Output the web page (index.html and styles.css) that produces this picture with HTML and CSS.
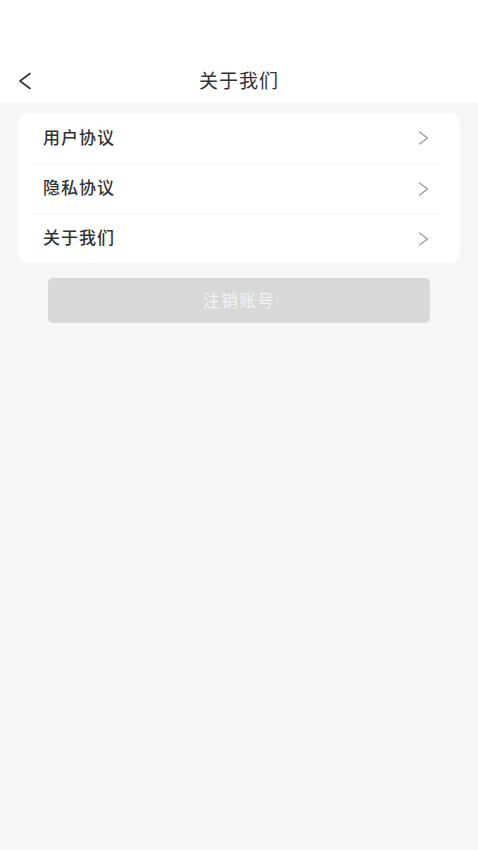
FILE: index.html
```html
<!DOCTYPE html>
<html lang="zh-CN">
<head>
<meta charset="utf-8">
<meta name="viewport" content="width=device-width, initial-scale=1">
<title>关于我们</title>
<link rel="stylesheet" href="styles.css">
</head>
<body>
<header class="header">
  <div class="navbar">
    <span class="back">
      <svg width="14" height="18" viewBox="0 0 14 18" fill="none" stroke="#333" stroke-width="1.6" stroke-linecap="round" stroke-linejoin="round"><path d="M12 1.5 L2 9 L12 16.5"/></svg>
    </span>
    <h1 class="title">关于我们</h1>
  </div>
</header>
<main class="main">
  <section class="card">
    <div class="row"><span class="label">用户协议</span><svg class="chev" width="11" height="14" viewBox="0 0 11 14" fill="none" stroke="#9a9a9a" stroke-width="1.3" stroke-linecap="round" stroke-linejoin="round"><path d="M1.5 1 L9.5 7 L1.5 13"/></svg></div>
    <div class="row"><span class="label">隐私协议</span><svg class="chev" width="11" height="14" viewBox="0 0 11 14" fill="none" stroke="#9a9a9a" stroke-width="1.3" stroke-linecap="round" stroke-linejoin="round"><path d="M1.5 1 L9.5 7 L1.5 13"/></svg></div>
    <div class="row"><span class="label">关于我们</span><svg class="chev" width="11" height="14" viewBox="0 0 11 14" fill="none" stroke="#9a9a9a" stroke-width="1.3" stroke-linecap="round" stroke-linejoin="round"><path d="M1.5 1 L9.5 7 L1.5 13"/></svg></div>
  </section>
  <button class="btn" type="button">注销账号</button>
</main>
</body>
</html>
```
FILE: styles.css
```css
* { box-sizing: border-box; }
html, body {
  margin: 0;
  padding: 0;
  background: #f6f6f6;
  font-family: "Noto Sans CJK SC", "Noto Sans", sans-serif;
  min-height: 850px;
}
.header {
  background: #ffffff;
  height: 103px;
  padding-top: 59px;
}
.navbar {
  height: 44px;
  display: flex;
  align-items: center;
  justify-content: center;
  position: relative;
}
.back {
  position: absolute;
  left: 18px;
  top: 13px;
  display: flex;
}
.title {
  margin: 0 0 4px;
  font-size: 19px;
  line-height: 1;
  font-weight: 400;
  color: #333;
  letter-spacing: 1px;
}
.main {
  padding: 10px 18px;
}
.card {
  background: #fff;
  border-radius: 10px;
  display: flex;
  flex-direction: column;
}
.row {
  height: 50px;
  margin: 0 20px 0 15px;
  padding: 0 11px 0 10px;
  display: flex;
  align-items: center;
  justify-content: space-between;
}
.row + .row {
  border-top: 1px solid #f4f4f4;
}
.label {
  font-size: 17px;
  line-height: 1;
  margin-bottom: 4px;
  font-weight: 500;
  color: #333;
  letter-spacing: 1px;
}
.btn {
  display: block;
  width: calc(100% - 60px);
  margin: 15px 30px 0;
  height: 45px;
  border: none;
  border-radius: 5px;
  background: #d8d8d8;
  color: #f3f3f3;
  font-family: "Noto Sans CJK SC", sans-serif;
  font-size: 17px;
  line-height: 1;
  padding: 0 0 2px;
  letter-spacing: 1px;
}
```
